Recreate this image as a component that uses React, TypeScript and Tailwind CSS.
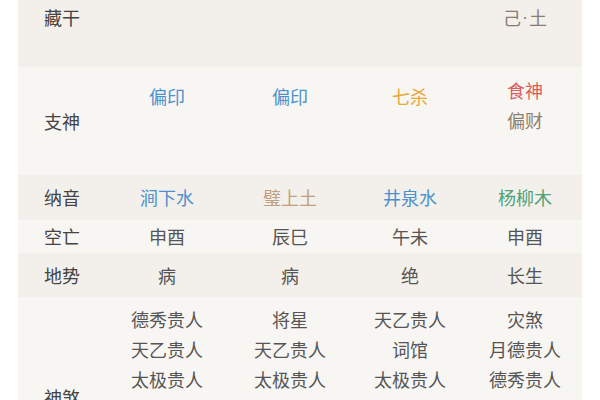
type Cell = { text: string; color?: string }[];

const labelCls = "flex items-center justify-center text-[#444]";
const font = { fontFamily: '"Noto Sans CJK SC", "Noto Sans", sans-serif' };

function Col({ items, pad }: { items: Cell; pad: string }) {
  return (
    <div className={`flex flex-col items-center ${pad}`}>
      {items.map((it, i) => (
        <span key={i} className={`leading-[30px] ${it.color ?? "text-[#555]"}`}>
          {it.text}
        </span>
      ))}
    </div>
  );
}

const shensha: string[][] = [
  ["德秀贵人", "天乙贵人", "太极贵人", "文昌贵人", "国印贵人", "华盖"],
  ["将星", "天乙贵人", "太极贵人", "月德合", "学堂", "寡宿"],
  ["天乙贵人", "词馆", "太极贵人", "金舆", "红艳", "劫煞"],
  ["灾煞", "月德贵人", "德秀贵人", "天德合", "驿马", "亡神"],
];

export default function App() {
  const grid = "grid grid-cols-[88px_122px_124px_116px_114px]";
  return (
    <div className="h-[400px] w-[600px] overflow-hidden bg-white px-[18px] text-[18px]" style={font}>
      <div className={`${grid} h-[67px] bg-[#f3f0eb]`}>
        <div className="flex justify-center pt-[4px] leading-[26px] text-[#444]">藏干</div>
        <div />
        <div />
        <div />
        <div className="flex justify-center pt-[4px] leading-[26px] text-[#8a7e74]">
          己<span className="font-['Liberation_Sans'] px-[1px]">·</span>土
        </div>
      </div>

      <div className={`${grid} h-[108px] bg-[#f8f6f3]`}>
        <div className={labelCls}>支神</div>
        <Col pad="pt-[14px]" items={[{ text: "偏印", color: "text-[#4c91cc]" }]} />
        <Col pad="pt-[14px]" items={[{ text: "偏印", color: "text-[#4c91cc]" }]} />
        <Col pad="pt-[14px]" items={[{ text: "七杀", color: "text-[#e9a83a]" }]} />
        <Col
          pad="pt-[8px]"
          items={[
            { text: "食神", color: "text-[#dc5d5b]" },
            { text: "偏财", color: "text-[#8e7f72]" },
          ]}
        />
      </div>

      <div className={`${grid} h-[45px] bg-[#f3f0eb]`}>
        <div className={labelCls}>纳音</div>
        <div className="flex items-center justify-center text-[#4c91cc]">涧下水</div>
        <div className="flex items-center justify-center text-[#bf9f7e]">璧上土</div>
        <div className="flex items-center justify-center text-[#4c91cc]">井泉水</div>
        <div className="flex items-center justify-center text-[#4ea37a]">杨柳木</div>
      </div>

      <div className={`${grid} h-[33px] bg-[#f8f6f3] text-[#555]`}>
        <div className={labelCls}>空亡</div>
        <div className="flex items-center justify-center">申酉</div>
        <div className="flex items-center justify-center">辰巳</div>
        <div className="flex items-center justify-center">午未</div>
        <div className="flex items-center justify-center">申酉</div>
      </div>

      <div className={`${grid} h-[44px] bg-[#f3f0eb] text-[#555]`}>
        <div className={labelCls}>地势</div>
        <div className="flex items-center justify-center">病</div>
        <div className="flex items-center justify-center">病</div>
        <div className="flex items-center justify-center">绝</div>
        <div className="flex items-center justify-center">长生</div>
      </div>

      <div className={`${grid} h-[200px] bg-[#f8f6f3]`}>
        <div className={labelCls}>神煞</div>
        {shensha.map((col, i) => (
          <Col key={i} pad="pt-[7px]" items={col.map((t) => ({ text: t }))} />
        ))}
      </div>
    </div>
  );
}
